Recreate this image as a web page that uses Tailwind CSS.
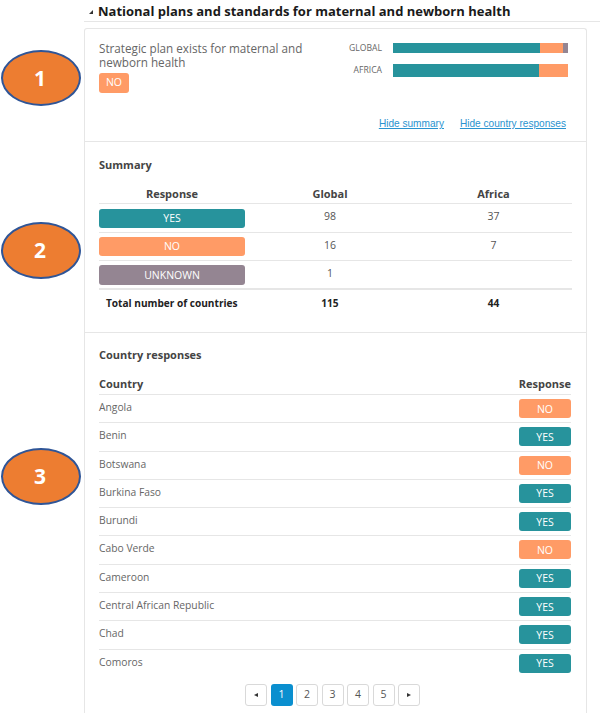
<!DOCTYPE html>
<html lang="en">
<head>
<meta charset="UTF-8">
<title>National plans</title>
<script src="https://cdn.jsdelivr.net/npm/@tailwindcss/browser@4"></script>
</head>
<body class="relative bg-white h-[713px] w-[600px] overflow-hidden font-['Open_Sans',sans-serif] text-[#555]">
  <!-- Annotation ovals -->
  <div class="absolute left-[1px] top-[50px] w-[80px] h-[56px] rounded-[50%] bg-[#ed7d31] border-2 border-[#2f5597] flex items-center justify-center pt-[1px] pr-[2px] text-white text-[21px] font-bold">1</div>
  <div class="absolute left-[1px] top-[222px] w-[80px] h-[57px] rounded-[50%] bg-[#ed7d31] border-2 border-[#2f5597] flex items-center justify-center pt-[1px] pr-[2px] text-white text-[21px] font-bold">2</div>
  <div class="absolute left-[1px] top-[448px] w-[80px] h-[57px] rounded-[50%] bg-[#ed7d31] border-2 border-[#2f5597] flex items-center justify-center pt-[1px] pr-[2px] text-white text-[21px] font-bold">3</div>

  <div class="ml-[84px] w-[516px]">
    <!-- Heading -->
    <div class="h-[22px] border-b border-[#e6e6e6] flex items-center pl-[4px] gap-[4px]">
      <svg width="6" height="6" viewBox="0 0 6 6" class="mt-[2px]"><polygon points="5,1 5,5 1,5" fill="#333"/></svg>
      <h2 class="text-[13px] font-bold text-[#1a1a1a] leading-[20px]">National plans and standards for maternal and newborn health</h2>
    </div>

    <!-- Card -->
    <div class="mt-[6px] w-[503px] border border-[#e6e6e6] border-b-0 rounded-t-[3px] h-[686px]">
      <!-- Section 1 -->
      <div class="h-[113px] border-b border-[#e6e6e6] px-[14px] pt-[12px] relative">
        <div class="flex justify-between">
          <div class="w-[215px]">
            <p class="text-[11.7px] leading-[14px] text-[#666]">Strategic plan exists for maternal and newborn health</p>
            <div class="mt-[4px] w-[30px] h-[20px] rounded-[3px] bg-[#ff9b66] text-white text-[10.5px] flex items-center justify-center">NO</div>
          </div>
          <div class="w-[221px] mr-[4px] flex flex-col gap-[11px] pt-[2px] text-[8.6px] text-[#666]">
            <div class="flex items-center h-[10px]">
              <span class="w-[35px] shrink-0 text-right mr-[11px] whitespace-nowrap">GLOBAL</span>
              <div class="flex w-[175px] h-[10px]">
                <div class="w-[147px] bg-[#27939c]"></div>
                <div class="w-[23px] bg-[#ff9b66]"></div>
                <div class="w-[5px] bg-[#948592]"></div>
              </div>
            </div>
            <div class="flex items-center h-[13px]">
              <span class="w-[35px] shrink-0 text-right mr-[11px] whitespace-nowrap">AFRICA</span>
              <div class="flex w-[175px] h-[13px]">
                <div class="w-[146px] bg-[#27939c]"></div>
                <div class="w-[29px] bg-[#ff9b66]"></div>
              </div>
            </div>
          </div>
        </div>
        <div class="absolute right-[20px] top-[87px] flex gap-[16px] text-[10.1px] text-[#2a93cf] underline font-['Liberation_Sans',sans-serif]">
          <a href="#">Hide summary</a>
          <a href="#">Hide country responses</a>
        </div>
      </div>

      <!-- Section 2: Summary -->
      <div class="h-[191px] border-b border-[#e6e6e6] pl-[14px] pr-[14px]">
        <h3 class="pt-[15px] text-[11px] leading-[15px] font-bold text-[#444]">Summary</h3>
        <div class="mt-[15px] w-[473px] text-[10.5px]">
          <div class="grid grid-cols-[146px_170px_157px] h-[17px] items-start border-b border-[#e6e6e6] text-center text-[11px] font-bold text-[#444] leading-[14px]">
            <span>Response</span><span>Global</span><span>Africa</span>
          </div>
          <div class="grid grid-cols-[146px_170px_157px] h-[29px] pt-[5px] border-b border-[#e6e6e6] text-center leading-[15px]">
            <div class="h-[19px] rounded-[3px] bg-[#27939c] text-white flex items-center justify-center">YES</div><span>98</span><span>37</span>
          </div>
          <div class="grid grid-cols-[146px_170px_157px] h-[28px] pt-[4px] border-b border-[#e6e6e6] text-center leading-[17px]">
            <div class="h-[19px] rounded-[3px] bg-[#ff9b66] text-white flex items-center justify-center">NO</div><span>16</span><span>7</span>
          </div>
          <div class="grid grid-cols-[146px_170px_157px] h-[29px] pt-[4px] border-b-2 border-[#e6e6e6] text-center leading-[17px]">
            <div class="h-[20px] rounded-[3px] bg-[#948592] text-white flex items-center justify-center">UNKNOWN</div><span>1</span><span></span>
          </div>
          <div class="grid grid-cols-[146px_170px_157px] pt-[6px] text-center text-[10.1px] font-bold text-[#222] leading-[14px]">
            <span class="text-left pl-[7px] whitespace-nowrap">Total number of countries</span><span>115</span><span>44</span>
          </div>
        </div>
      </div>

      <!-- Section 3: Country responses -->
      <div class="pl-[14px] pr-[14px]">
        <h3 class="pt-[14px] text-[11px] leading-[15px] font-bold text-[#444]">Country responses</h3>
        <div class="mt-[15px] w-[472px] text-[10.5px]">
          <div class="flex justify-between h-[18px] border-b border-[#e6e6e6] text-[11px] font-bold text-[#444] leading-[14px]">
            <span>Country</span><span>Response</span>
          </div>
          <div class="flex justify-between h-[28.3px] pt-[4px] border-b border-[#e6e6e6] text-[10.3px] leading-[16px] text-[#666]"><span>Angola</span><span class="w-[52px] h-[19px] rounded-[3px] bg-[#ff9b66] text-white text-[10.5px] flex items-center justify-center">NO</span></div>
          <div class="flex justify-between h-[28.3px] pt-[4px] border-b border-[#e6e6e6] text-[10.3px] leading-[16px] text-[#666]"><span>Benin</span><span class="w-[52px] h-[19px] rounded-[3px] bg-[#27939c] text-white text-[10.5px] flex items-center justify-center">YES</span></div>
          <div class="flex justify-between h-[28.3px] pt-[4px] border-b border-[#e6e6e6] text-[10.3px] leading-[16px] text-[#666]"><span>Botswana</span><span class="w-[52px] h-[19px] rounded-[3px] bg-[#ff9b66] text-white text-[10.5px] flex items-center justify-center">NO</span></div>
          <div class="flex justify-between h-[28.3px] pt-[4px] border-b border-[#e6e6e6] text-[10.3px] leading-[16px] text-[#666]"><span>Burkina Faso</span><span class="w-[52px] h-[19px] rounded-[3px] bg-[#27939c] text-white text-[10.5px] flex items-center justify-center">YES</span></div>
          <div class="flex justify-between h-[28.3px] pt-[4px] border-b border-[#e6e6e6] text-[10.3px] leading-[16px] text-[#666]"><span>Burundi</span><span class="w-[52px] h-[19px] rounded-[3px] bg-[#27939c] text-white text-[10.5px] flex items-center justify-center">YES</span></div>
          <div class="flex justify-between h-[28.3px] pt-[4px] border-b border-[#e6e6e6] text-[10.3px] leading-[16px] text-[#666]"><span>Cabo Verde</span><span class="w-[52px] h-[19px] rounded-[3px] bg-[#ff9b66] text-white text-[10.5px] flex items-center justify-center">NO</span></div>
          <div class="flex justify-between h-[28.3px] pt-[4px] border-b border-[#e6e6e6] text-[10.3px] leading-[16px] text-[#666]"><span>Cameroon</span><span class="w-[52px] h-[19px] rounded-[3px] bg-[#27939c] text-white text-[10.5px] flex items-center justify-center">YES</span></div>
          <div class="flex justify-between h-[28.3px] pt-[4px] border-b border-[#e6e6e6] text-[10.3px] leading-[16px] text-[#666]"><span>Central African Republic</span><span class="w-[52px] h-[19px] rounded-[3px] bg-[#27939c] text-white text-[10.5px] flex items-center justify-center">YES</span></div>
          <div class="flex justify-between h-[28.3px] pt-[4px] border-b border-[#e6e6e6] text-[10.3px] leading-[16px] text-[#666]"><span>Chad</span><span class="w-[52px] h-[19px] rounded-[3px] bg-[#27939c] text-white text-[10.5px] flex items-center justify-center">YES</span></div>
          <div class="flex justify-between h-[28.3px] pt-[4px] text-[10.3px] leading-[16px] text-[#666]"><span>Comoros</span><span class="w-[52px] h-[19px] rounded-[3px] bg-[#27939c] text-white text-[10.5px] flex items-center justify-center">YES</span></div>

          <!-- Pagination -->
          <div class="mt-[6px] flex justify-center gap-[3.5px] pr-[5px] text-[10.5px]">
            <button class="w-[22px] h-[22px] rounded-[3px] border border-[#d9d9d9] flex items-center justify-center"><svg width="6" height="6" viewBox="0 0 6 6"><polygon points="5,1 5,5 1,3" fill="#333"/></svg></button>
            <button class="w-[22px] h-[22px] rounded-[3px] bg-[#0a8fcf] text-white flex items-center justify-center">1</button>
            <button class="w-[22px] h-[22px] rounded-[3px] border border-[#d9d9d9] flex items-center justify-center">2</button>
            <button class="w-[22px] h-[22px] rounded-[3px] border border-[#d9d9d9] flex items-center justify-center">3</button>
            <button class="w-[22px] h-[22px] rounded-[3px] border border-[#d9d9d9] flex items-center justify-center">4</button>
            <button class="w-[22px] h-[22px] rounded-[3px] border border-[#d9d9d9] flex items-center justify-center">5</button>
            <button class="w-[22px] h-[22px] rounded-[3px] border border-[#d9d9d9] flex items-center justify-center"><svg width="6" height="6" viewBox="0 0 6 6"><polygon points="1,1 1,5 5,3" fill="#333"/></svg></button>
          </div>
        </div>
      </div>
    </div>
  </div>
</body>
</html>
